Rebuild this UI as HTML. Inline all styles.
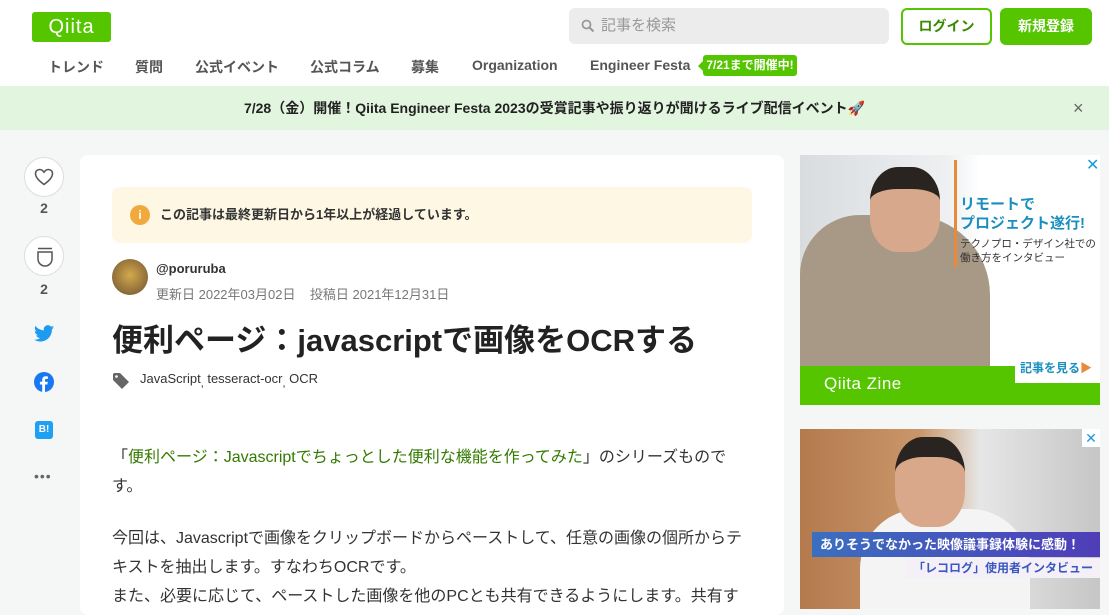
<!DOCTYPE html>
<html><head><meta charset="utf-8"><style>
*{box-sizing:border-box;margin:0;padding:0}
body{width:1109px;height:600px;overflow:hidden;background:#f5f6f6;font-family:"Liberation Sans","Noto Sans CJK JP",sans-serif;color:#333;position:relative}
.a{position:absolute}
header{position:absolute;left:0;top:0;width:1109px;height:86px;background:#fff}
.logo{left:32px;top:12px;width:79px;height:30px;background:#55c500;border-radius:3px;color:#fff;font-size:20px;text-align:center;line-height:30px;letter-spacing:1px}
.nav{top:57px;font-size:14px;color:#555;font-weight:bold}
.search{left:569px;top:8px;width:320px;height:36px;background:#ececec;border-radius:6px;color:#999;font-size:15px;line-height:36px;padding-left:32px}
.btn{top:8px;height:37px;border-radius:6px;font-size:14px;font-weight:bold;text-align:center;line-height:33px}
.banner{left:0;top:86px;width:1109px;height:44px;background:#e2f5de;font-size:14px;font-weight:bold;text-align:center;line-height:44px;color:#222}
.card{left:80px;top:155px;width:704px;height:460px;background:#fff;border-radius:8px}
.side{left:24px;width:40px;height:40px;border:1px solid #ddd;border-radius:50%;background:#fff}
.cnt{left:24px;width:40px;text-align:center;font-size:14px;font-weight:bold;color:#555}
p.t{font-size:16px;color:#333;line-height:29px}
</style></head><body>
<header>
<div class="a logo">Qiita</div>
<div class="a search"><svg class="a" style="left:12px;top:11px" width="14" height="14" viewBox="0 0 14 14"><circle cx="5.5" cy="5.5" r="4" fill="none" stroke="#999" stroke-width="1.8"/><path d="M8.5 8.5L12.5 12.5" stroke="#999" stroke-width="2"/></svg>記事を検索</div>
<div class="a btn" style="left:901px;width:91px;border:2px solid #55c500;color:#3a8a00;background:#fff">ログイン</div>
<div class="a btn" style="left:1000px;width:92px;background:#55c500;color:#fff;line-height:37px">新規登録</div>
<div class="a nav" style="left:48px">トレンド</div>
<div class="a nav" style="left:135px">質問</div>
<div class="a nav" style="left:195px">公式イベント</div>
<div class="a nav" style="left:310px">公式コラム</div>
<div class="a nav" style="left:411px">募集</div>
<div class="a nav" style="left:472px">Organization</div>
<div class="a nav" style="left:590px">Engineer Festa</div>
<div class="a" style="left:703px;top:55px;width:94px;height:21px;background:#55c500;border-radius:3px;color:#fff;font-size:12px;font-weight:bold;text-align:center;line-height:21px">7/21まで開催中!</div>
<div class="a" style="left:698px;top:61px;border:5px solid transparent;border-right-color:#55c500;border-left:0"></div>
</header>
<div class="a banner">7/28（金）開催！Qiita Engineer Festa 2023の受賞記事や振り返りが聞けるライブ配信イベント🚀<span class="a" style="left:1073px;top:0;font-weight:normal;color:#666;font-size:18px">×</span></div>

<div class="a side" style="top:157px"><svg class="a" style="left:9px;top:10px" width="20" height="18" viewBox="0 0 20 18"><path d="M10 16.5C4 12 1.5 9 1.5 5.5 1.5 3 3.5 1.5 5.7 1.5 7.6 1.5 9 2.7 10 4.2 11 2.7 12.4 1.5 14.3 1.5 16.5 1.5 18.5 3 18.5 5.5 18.5 9 16 12 10 16.5Z" fill="none" stroke="#555" stroke-width="1.5"/></svg></div>
<div class="a cnt" style="top:200px">2</div>
<div class="a side" style="top:236px"><svg class="a" style="left:11px;top:10px" width="18" height="20" viewBox="0 0 18 20"><path d="M2 1.5H16M2 5H16V12A7 7 0 0 1 2 12Z" fill="none" stroke="#555" stroke-width="1.5"/></svg></div>
<div class="a cnt" style="top:281px">2</div>
<svg class="a" style="left:34px;top:325px" width="20" height="17" viewBox="0 0 24 20"><path d="M24 2.4c-.9.4-1.8.6-2.8.8 1-.6 1.800-1.600 2.2-2.700-1 .6-2 1-3.100 1.200A4.900 4.900 0 0 0 11.900 6.200 14 14 0 0 1 1.700 1 4.900 4.900 0 0 0 3.200 7.600 4.900 4.900 0 0 1 1 7v.1a4.900 4.900 0 0 0 3.900 4.800 4.900 4.900 0 0 1-2.200.1 4.900 4.900 0 0 0 4.600 3.400A9.900 9.900 0 0 1 0 17.400 14 14 0 0 0 7.500 19.600c9.100 0 14-7.500 14-14v-.6c1-.7 1.800-1.600 2.500-2.600z" fill="#1d9bf0"/></svg>
<svg class="a" style="left:34px;top:372px" width="20" height="20" viewBox="0 0 20 20"><circle cx="10" cy="10" r="10" fill="#1877f2"/><path d="M11 20V12.5H13.4L13.8 9.8H11V8.2C11 7.4 11.3 6.9 12.4 6.9H13.9V4.5C13.6 4.4 12.7 4.3 11.7 4.3 9.6 4.3 8.2 5.6 8.2 7.9V9.8H5.9V12.5H8.2V20Z" fill="#fff"/></svg>
<div class="a" style="left:35px;top:421px;width:18px;height:18px;background:#1ea1f2;border-radius:3px;color:#fff;font-size:10px;font-weight:bold;text-align:center;line-height:18px">B!</div>
<div class="a" style="left:34px;top:468px;font-size:14px;color:#666;letter-spacing:1px">•••</div>

<div class="a card">
<div class="a" style="left:32px;top:32px;width:640px;height:56px;background:#fdf7e4;border-radius:8px;font-size:13px;font-weight:bold;color:#333;line-height:56px;padding-left:48px">この記事は最終更新日から1年以上が経過しています。<div class="a" style="left:18px;top:18px;width:20px;height:20px;border-radius:50%;background:#f2a93b;color:#fff;font-size:12px;line-height:20px;text-align:center">i</div></div>
<div class="a" style="left:32px;top:104px;width:36px;height:36px;border-radius:50%;background:radial-gradient(circle at 50% 45%,#d4a94a,#8a6a3a 70%,#c9b79a)"></div>
<div class="a" style="left:76px;top:106px;font-size:13px;font-weight:bold;color:#333">@poruruba</div>
<div class="a" style="left:76px;top:129px;font-size:13px;color:#777">更新日 2022年03月02日&nbsp;&nbsp;&nbsp;&nbsp;投稿日 2021年12月31日</div>
<div class="a" style="left:32px;top:160px;font-size:31px;font-weight:bold;color:#222">便利ページ：javascriptで画像をOCRする</div>
<svg class="a" style="left:32px;top:217px" width="18" height="18" viewBox="0 0 18 18"><path d="M1 2V8L10 17 17 10 8 1H2Z" fill="#666"/><circle cx="4.5" cy="4.5" r="1.3" fill="#fff"/></svg>
<div class="a" style="left:60px;top:216px;font-size:13px;color:#333">JavaScript<sub>,</sub> tesseract-ocr<sub>,</sub> OCR</div>
<p class="a t" style="left:32px;top:288px;width:625px">「<span style="color:#337a00">便利ページ：Javascriptでちょっとした便利な機能を作ってみた</span>」のシリーズものです。</p>
<p class="a t" style="left:32px;top:369px;width:640px">今回は、Javascriptで画像をクリップボードからペーストして、任意の画像の個所からテキストを抽出します。すなわちOCRです。<br>また、必要に応じて、ペーストした画像を他のPCとも共有できるようにします。共有す</p>
</div>

<div class="a" style="left:800px;top:155px;width:300px;height:250px;background:linear-gradient(90deg,#d9dcdf 0,#eef0f2 50%,#fff 60%);overflow:hidden">
<div class="a" style="left:0;top:60px;width:190px;height:160px;background:#a89886;border-radius:60px 80px 0 0"></div>
<div class="a" style="left:70px;top:12px;width:70px;height:85px;background:#d8a88c;border-radius:40%;border-top:22px solid #2a2420"></div>
<div class="a" style="left:154px;top:5px;width:3px;height:108px;background:#e88a3c"></div>
<div class="a" style="left:160px;top:40px;font-size:15px;font-weight:bold;color:#1a8fbf;line-height:19px;white-space:nowrap">リモートで<br>プロジェクト遂行!</div>
<div class="a" style="left:160px;top:82px;font-size:10.5px;color:#333;line-height:14px;white-space:nowrap">テクノプロ・デザイン社での<br>働き方をインタビュー</div>
<div class="a" style="left:286px;top:0;font-size:16px;color:#1a9ad6">✕</div>
<div class="a" style="left:0;top:211px;width:300px;height:39px;background:#55c500"></div>
<div class="a" style="left:215px;top:198px;width:85px;height:30px;background:#fff;font-size:12px;font-weight:bold;color:#1a8fbf;line-height:30px;padding-left:5px">記事を見る<span style="color:#e88a3c">▶</span></div>
<div class="a" style="left:24px;top:219px;font-size:17px;color:#fff;letter-spacing:.5px">Qiita Zine</div>
</div>

<div class="a" style="left:800px;top:429px;width:300px;height:180px;background:linear-gradient(90deg,#b47a4e 0,#c9966a 40%,#e6e6e6 60%,#c6c6c6);overflow:hidden">
<div class="a" style="left:60px;top:80px;width:170px;height:110px;background:#f4f4f4;border-radius:60px 60px 0 0"></div>
<div class="a" style="left:95px;top:8px;width:70px;height:90px;background:#d9a88a;border-radius:40%;border-top:20px solid #2a2420"></div>
<div class="a" style="left:12px;top:103px;width:288px;height:25px;background:linear-gradient(90deg,#3b6fc0,#4f3db8);color:#fff;font-size:13px;font-weight:bold;line-height:25px;padding-left:8px">ありそうでなかった映像議事録体験に感動！</div>
<div class="a" style="left:105px;top:129px;width:195px;height:20px;background:#f5f0f8;color:#3a58c0;font-size:12px;font-weight:bold;line-height:20px;padding-left:8px">「レコログ」使用者インタビュー</div>
<div class="a" style="left:282px;top:0;width:18px;height:18px;background:#fff;color:#1a9ad6;font-size:14px;text-align:center;line-height:18px">✕</div>
</div>
</body></html>
